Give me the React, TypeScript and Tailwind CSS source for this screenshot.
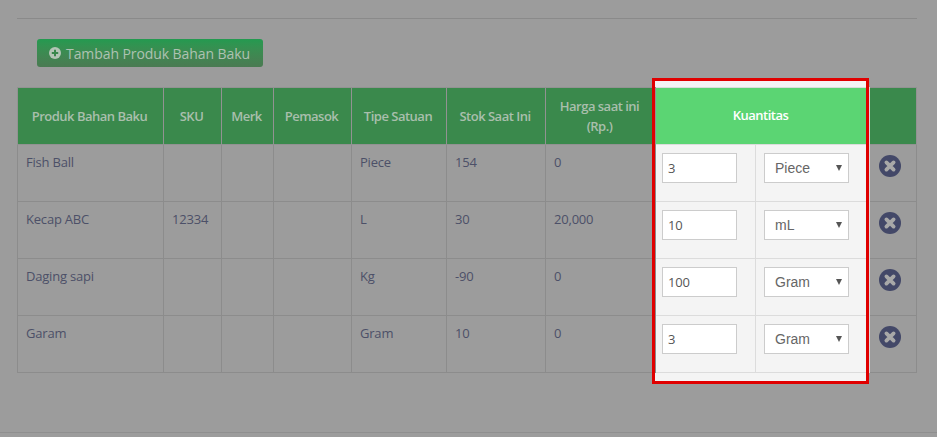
import React from "react";

const rows = [
  { name: "Fish Ball", sku: "", unit: "Piece", stock: "154", price: "0", qty: "3", pick: "Piece" },
  { name: "Kecap ABC", sku: "12334", unit: "L", stock: "30", price: "20,000", qty: "10", pick: "mL" },
  { name: "Daging sapi", sku: "", unit: "Kg", stock: "-90", price: "0", qty: "100", pick: "Gram" },
  { name: "Garam", sku: "", unit: "Gram", stock: "10", price: "0", qty: "3", pick: "Gram" },
];

const th = "border border-[#929292] bg-[#3a894c] text-center align-middle text-[13px] font-semibold leading-[20px] tracking-[-0.5px] text-[#a9bfac] pl-[7px] pr-[9px]";
const td = "h-[57px] border border-[#8c8c8c] align-top px-2 pt-[8px] text-[13px] leading-[18px] tracking-[-0.2px] text-[#4c5068]";
const tdOn = "h-[57px] border border-[#dcdcdc] bg-[#f4f4f4] align-top pt-[8px]";

function RemoveIcon() {
  return (
    <svg width="22" height="22" viewBox="0 0 22 22">
      <circle cx="11" cy="11" r="11" fill="#434868" />
      <path d="M7.4 7.4l7.2 7.2M14.6 7.4l-7.2 7.2" stroke="#a8a8a8" strokeWidth="3.8" strokeLinecap="round" />
    </svg>
  );
}

function PlusIcon() {
  return (
    <svg width="12" height="12" viewBox="0 0 12 12">
      <circle cx="6" cy="6" r="6" fill="#b4c5b6" />
      <path d="M6 2.8v6.4M2.8 6h6.4" stroke="#3a874c" strokeWidth="2" />
    </svg>
  );
}

export default function App() {
  return (
    <div className="relative h-[437px] w-[937px] overflow-hidden bg-[#9c9c9c] font-['Open_Sans',sans-serif]">
      <div className="ml-[17px] h-[19px] w-[900px] border-b border-[#8a8a8a]" />
      <div className="pl-[37px] pt-[20px]">
        <button className="flex h-[28px] w-[226px] items-center gap-[5px] rounded-[3px] bg-gradient-to-b from-[#239a50] to-[#4a7a52] pl-[12px] text-[14px] tracking-[-0.08px] text-[#aec2b2]">
          <PlusIcon />
          Tambah Produk Bahan Baku
        </button>
      </div>

      <div className="relative ml-[17px] mt-[20px] w-[900px]">
        <div className="absolute left-[635px] top-[-9px] h-[306px] w-[217px] bg-[#f4f4f4]" />
        <table className="relative w-[899px] table-fixed border-collapse">
          <colgroup>
            <col className="w-[146px]" />
            <col className="w-[58px]" />
            <col className="w-[52px]" />
            <col className="w-[78px]" />
            <col className="w-[95px]" />
            <col className="w-[99px]" />
            <col className="w-[110px]" />
            <col className="w-[100px]" />
            <col className="w-[114px]" />
            <col className="w-[47px]" />
          </colgroup>
          <thead>
            <tr className="h-[57px]">
              <th className={th}>Produk Bahan Baku</th>
              <th className={th}>SKU</th>
              <th className={th}>Merk</th>
              <th className={th}>Pemasok</th>
              <th className={th}>Tipe Satuan</th>
              <th className={th}>Stok Saat Ini</th>
              <th className={th}>Harga saat ini (Rp.)</th>
              <th colSpan={2} className="border border-[#dcdcdc] bg-[#5bd573] pr-[4px] text-center align-middle text-[13px] font-semibold tracking-[-0.5px] text-white">
                Kuantitas
              </th>
              <th className={th} />
            </tr>
          </thead>
          <tbody>
            {rows.map((r) => (
              <tr key={r.name}>
                <td className={td}>{r.name}</td>
                <td className={td}>{r.sku}</td>
                <td className={td} />
                <td className={td} />
                <td className={td}>{r.unit}</td>
                <td className={td}>{r.stock}</td>
                <td className={td}>{r.price}</td>
                <td className={`${tdOn} pl-[6px]`}>
                  <input
                    readOnly
                    value={r.qty}
                    className="block h-[30px] w-[75px] border border-[#cccccc] bg-white px-[5px] text-[13px] tracking-[-0.2px] text-[#555555]"
                  />
                </td>
                <td className={`${tdOn} pl-[8px]`}>
                  <div className="flex h-[30px] w-[85px] items-center justify-between border border-[#cccccc] bg-white pl-[10px] pr-[6px] font-['Liberation_Sans',sans-serif] text-[14px] text-[#666666]">
                    {r.pick}
                    <span className="h-0 w-0 border-x-[3.5px] border-t-[6px] border-x-transparent border-t-[#555555]" />
                  </div>
                </td>
                <td className={`${td} !pl-[9px] !pt-[10px]`}>
                  <RemoveIcon />
                </td>
              </tr>
            ))}
          </tbody>
        </table>
        <div className="pointer-events-none absolute left-[635px] top-[-9px] h-[306px] w-[217px] border-[3px] border-[#e00000]" />
      </div>

      <div className="absolute bottom-[4px] left-0 w-full border-b border-[#8f8f8f]" />
    </div>
  );
}
